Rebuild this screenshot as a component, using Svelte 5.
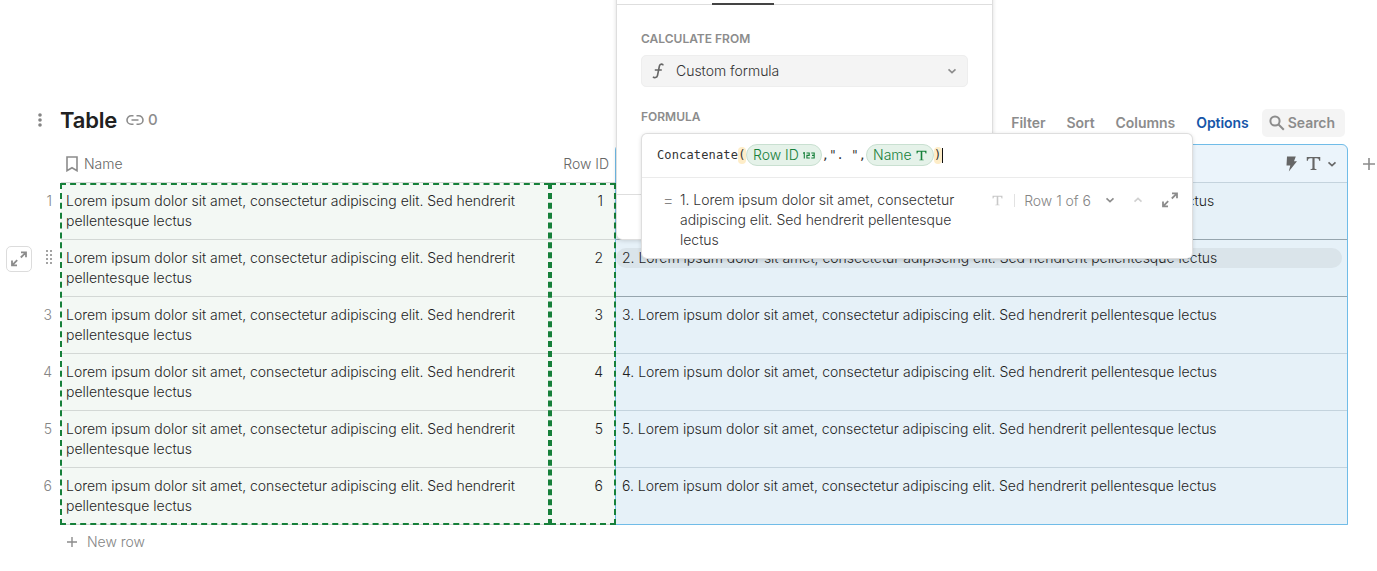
<script>
    const lorem = 'Lorem ipsum dolor sit amet, consectetur adipiscing elit. Sed hendrerit pellentesque lectus';
    const rows = [1, 2, 3, 4, 5, 6].map((id) => ({ id, name: lorem, result: `${id}. ${lorem}` }));
    const actions = ['Filter', 'Sort', 'Columns', 'Options'];

    let hovered = $state(2);
    let active = $state('Options');
</script>

{#snippet textIcon(size)}
    <svg class="text-icon" width={size} height={size} viewBox="0 0 14 14">
        <path d="M0.7 1h12.6v3.5h-1.1c-.2-1.6-.7-2.3-2.2-2.3H8v9.1c0 .8.3 1 1.8 1.1v.6H4.2v-.6c1.5-.1 1.8-.3 1.8-1.1V2.200H4c-1.500 0-2 .7-2.200 2.300H.7z" />
    </svg>
{/snippet}

{#snippet chevron(up)}
    <svg class="chevron" width="10" height="10" viewBox="0 0 10 10">
        <path d={up ? 'M1.500 6.700 5 3.400l3.500 3.300' : 'M1.500 3.400 5 6.700l3.500-3.300'} />
    </svg>
{/snippet}

{#snippet expandIcon()}
    <svg class="expand-icon" width="18" height="18" viewBox="0 0 18 18">
        <path d="M11 2.300h5v5M15.500 2.800 10.800 7.500M7 15.400H2v-5M2.500 14.900l4.700-4.700" />
    </svg>
{/snippet}

<main>
    <div class="toolbar">
        <svg class="dots" width="6" height="16" viewBox="0 0 6 16">
            <circle cx="3" cy="3" r="1.800" /><circle cx="3" cy="8" r="1.800" /><circle cx="3" cy="13" r="1.800" />
        </svg>
        <h1>Table</h1>
        <svg class="link" width="18" height="12" viewBox="0 0 18 12">
            <path d="M7.500 1.700H5.300a4.300 4.300 0 0 0 0 8.600h2.200M10.500 1.700h2.200a4.300 4.300 0 0 1 0 8.600h-2.200M5.500 6h7" />
        </svg>
        <span class="count">0</span>
        <nav>
            {#each actions as action}
                <button class:active={active === action} onclick={() => (active = action)}>{action}</button>
            {/each}
            <button class="search">
                <svg width="16" height="16" viewBox="0 0 16 16">
                    <circle cx="6" cy="6" r="4.600" /><path d="m9.500 9.500 5.300 5.300" />
                </svg>
                Search
            </button>
        </nav>
    </div>

    <div class="table">
        <div class="row head">
            <div class="gutter"></div>
            <div class="cell name">
                <svg width="12" height="16" viewBox="0 0 12 16"><path d="M1 1h10v13.700l-5-3-5 3z" /></svg>
                Name
            </div>
            <div class="cell row-id">Row ID</div>
            <div class="cell result">
                <svg width="11" height="16" viewBox="0 0 11 16"><path class="solid" d="M1 .5h8.800L8 5.300h3L2.800 15.500 4.300 9.500H.5z" /></svg>
                {@render textIcon(15)}
                {@render chevron(false)}
            </div>
            <div class="add">
                <svg width="12" height="12" viewBox="0 0 12 12"><path d="M6 0v12M0 6h12" /></svg>
            </div>
        </div>

        {#each rows as row}
            <div class="row" class:hovered={hovered === row.id} class:before={hovered === row.id + 1}>
                <div class="gutter">
                    {#if hovered === row.id}
                        <span class="open">{@render expandIcon()}</span>
                        <svg class="grip" width="6" height="16" viewBox="0 0 6 16">
                            {#each [1, 5, 9, 13] as y}
                                <rect x="0" {y} width="2" height="2" /><rect x="4" {y} width="2" height="2" />
                            {/each}
                        </svg>
                    {:else}
                        {row.id}
                    {/if}
                </div>
                <div class="cell name">{row.name}</div>
                <div class="cell row-id">{row.id}</div>
                <div class="cell result"><span>{row.result}</span></div>
            </div>
        {/each}

        <!-- columns referenced by the formula -->
        <div class="marker first"></div>
        <div class="marker second"></div>
        <div class="selection"></div>
    </div>

    <div class="new-row">
        <svg width="10" height="10" viewBox="0 0 10 10"><path d="M5 0v10M0 5h10" /></svg>
        New row
    </div>

    <section class="panel">
        <div class="tabs"><span class="tab"></span></div>
        <div class="panel-body">
            <h2>CALCULATE FROM</h2>
            <div class="select">
                <svg width="12" height="16" viewBox="0 0 12 16">
                    <path d="M11.200 2.400C10.800.8 8 .5 7.400 3L5.500 12.500c-.5 2.400-3.300 2.600-4.500 1.200M2.800 7h7" />
                </svg>
                <span>Custom formula</span>
                {@render chevron(false)}
            </div>
            <h2>FORMULA</h2>
        </div>
        <div class="panel-footer"></div>
    </section>

    <section class="editor">
        <div class="formula">
            <span>Concatenate</span><span class="paren">(</span><span class="chip">Row ID
                <svg class="num" width="12" height="7" viewBox="0 0 12 7">
                    <path d="M0 1.200 1.300.700v5.800M3.500 1H6.200V3.400H3.900V6H6.800M8.300 1h2.900v5H8.300M9 3.400h2.200" />
                </svg></span><span class="code">,". ",</span><span class="chip">Name {@render textIcon(11)}</span><span class="paren">)</span><span class="caret"></span>
        </div>
        <div class="preview">
            <span class="equals">=</span>
            <p>1. {lorem}</p>
            <div class="pager">
                {@render textIcon(11)}
                <span class="row-pos">Row 1 of 6</span>
                {@render chevron(false)}
                <span class="disabled">{@render chevron(true)}</span>
                {@render expandIcon()}
            </div>
        </div>
    </section>
</main>

<style>
    :global(body) {
        background: #fff;
    }

    main {
        position: relative;
        width: 1377px;
        height: 571px;
        overflow: hidden;
        font: 350 14px/20px Inter, sans-serif;
        letter-spacing: -0.02px;
        color: #1f1f1f;
    }

    svg {
        display: block;
        flex: none;
        fill: none;
        stroke: #8c8c8c;
        stroke-width: 1.6;
    }

    .toolbar {
        display: flex;
        align-items: center;
        height: 144px;
        padding: 96px 32px 0 37px;
        box-sizing: border-box;
    }

    .dots {
        fill: #858585;
        stroke: none;
    }

    h1 {
        margin: 0 9px 0 17px;
        font-size: 22px;
        line-height: 28px;
        font-weight: 600;
        letter-spacing: -0.2px;
        color: #212121;
    }

    .count {
        margin-left: 4px;
        font-size: 15px;
        font-weight: 500;
        color: #8c8c8c;
    }

    nav {
        display: flex;
        align-items: center;
        gap: 21px;
        margin: 6px 0 0 auto;
    }

    button {
        padding: 0;
        border: 0;
        background: none;
        font: 600 14px/20px Inter, sans-serif;
        letter-spacing: -0.05px;
        color: #8c8c8c;
    }

    button.active {
        color: #1656a8;
    }

    .search {
        display: flex;
        align-items: center;
        gap: 3px;
        height: 28px;
        margin-left: -8px;
        padding: 0 10px 0 7px;
        border-radius: 5px;
        background: #f4f4f4;
    }

    .search svg {
        stroke-width: 2;
    }

    .table {
        position: relative;
    }

    .row {
        display: grid;
        grid-template-columns: 61px 489px 66px 732px 29px;
        height: 57px;
    }

    .gutter {
        display: flex;
        justify-content: flex-end;
        padding: 8px 9px 0 0;
        color: #858585;
    }

    .cell {
        box-sizing: border-box;
        border-bottom: 1px solid #d3d8d5;
        padding: 8px 5px;
        background: #f3f8f4;
    }

    .row-id {
        padding-right: 13px;
        text-align: right;
    }

    .cell.result {
        padding: 8px 6px;
        border-color: #c4d3dd;
        background: #e6f1f8;
        white-space: nowrap;
    }

    .before .cell.result,
    .hovered .cell.result {
        border-color: #96a5ae;
    }

    .hovered .result span {
        display: block;
        margin: 0 0 0 -6px;
        padding-left: 6px;
        border-radius: 10px;
        background: #dae4ea;
    }

    .head {
        height: 39px;
    }

    .head .cell {
        display: flex;
        align-items: center;
        gap: 6px;
        padding-top: 9px;
        background: #fff;
        color: #666;
    }

    .head .row-id {
        justify-content: flex-end;
        padding-right: 7px;
    }

    .head .cell.result {
        justify-content: flex-end;
        gap: 9px;
        padding-right: 11px;
        border-radius: 0 6px 0 0;
        background: #ebf4fb;
    }

    .head .result .chevron {
        margin-left: -3px;
        stroke: #666;
    }

    .solid {
        fill: #666;
        stroke: none;
    }

    .add {
        display: flex;
        align-items: center;
        padding-left: 15px;
    }

    .text-icon {
        fill: #666;
        stroke: none;
    }

    .expand-icon {
        stroke-width: 1.8;
    }

    .open {
        display: flex;
        align-items: center;
        justify-content: center;
        width: 24px;
        height: 24px;
        margin: -2px 14px 0 0;
        border: 1px solid #dcdcdc;
        border-radius: 5px;
    }

    .grip {
        margin-top: 1px;
        fill: #a3a3a3;
        stroke: none;
    }

    .marker,
    .selection {
        position: absolute;
        top: 39px;
        bottom: 0;
        box-sizing: border-box;
        pointer-events: none;
    }

    .marker {
        z-index: 1;
        border: 2px dashed #16803a;
    }

    .first {
        left: 60px;
        width: 490px;
    }

    .second {
        left: 550px;
        width: 66px;
    }

    .selection {
        top: 0;
        left: 615px;
        width: 733px;
        border: 1px solid #70bce8;
        border-radius: 6px 6px 0 0;
    }

    .new-row {
        display: flex;
        align-items: center;
        gap: 10px;
        padding: 7px 0 0 67px;
        color: #858585;
    }

    .new-row svg {
        stroke-width: 1.4;
    }

    .panel {
        position: absolute;
        z-index: 2;
        top: -10px;
        left: 617px;
        display: flex;
        flex-direction: column;
        width: 375px;
        height: 249px;
        border-radius: 0 0 5px 5px;
        background: #fff;
        box-shadow: 0 0 0 1px #dedede, 0 1px 5px rgba(0, 0, 0, 0.2);
    }

    .tabs {
        display: flex;
        align-items: flex-end;
        height: 15px;
        box-sizing: border-box;
        border-bottom: 1px solid #dedede;
    }

    .tab {
        width: 62px;
        height: 2px;
        margin: 0 0 -1px 95px;
        background: #444;
    }

    .panel-body {
        flex: 1;
        padding: 24px 24px 0;
    }

    h2 {
        margin: 0;
        font-size: 12px;
        line-height: 20px;
        font-weight: 600;
        letter-spacing: 0;
        color: #8c8c8c;
    }

    .select {
        display: flex;
        align-items: center;
        height: 32px;
        margin: 6px 0 20px;
        padding: 0 10px;
        box-sizing: border-box;
        border: 1px solid #eee;
        border-radius: 5px;
        background: #f4f4f4;
        color: #333;
    }

    .select span {
        flex: 1;
        margin-left: 12px;
    }

    .select > svg:first-child {
        stroke: #666;
    }

    .panel-footer {
        height: 44px;
        border-top: 1px solid #dedede;
    }

    .editor {
        position: absolute;
        z-index: 3;
        top: 134px;
        left: 642px;
        width: 550px;
        height: 124px;
        border-radius: 5px;
        background: #fff;
        box-shadow: 0 0 0 1px #dedede, 0 1px 5px rgba(0, 0, 0, 0.2);
    }

    .formula {
        display: flex;
        align-items: center;
        height: 42px;
        padding: 0 0 1px 15px;
        border-bottom: 1px solid #ebebeb;
        font: 12px/17px "DejaVu Sans Mono", monospace;
        letter-spacing: 0.14px;
        white-space: pre;
        color: #333;
    }

    .paren {
        width: 8px;
        border-radius: 4px;
        background: #feedc8;
        text-align: center;
    }

    .chip {
        display: flex;
        align-items: center;
        gap: 4px;
        height: 20px;
        padding: 0 6px;
        border: 1px solid #c9e0d1;
        border-radius: 11px;
        background: #e5f2e9;
        font: 350 14px/20px Inter, sans-serif;
        letter-spacing: 0;
        white-space: normal;
        color: #16803a;
    }

    .chip .text-icon {
        fill: #16803a;
    }

    .num {
        stroke: #16803a;
        stroke-width: 1.1;
    }

    .caret {
        width: 1px;
        height: 15px;
        background: #111;
    }

    .preview {
        display: flex;
        padding: 12px 13px 0 21px;
        color: #333;
    }

    .equals {
        width: 17px;
        font-size: 16px;
        color: #858585;
    }

    p {
        width: 290px;
        margin: 0;
    }

    .pager {
        display: flex;
        align-items: center;
        height: 20px;
        margin-left: auto;
        color: #858585;
    }

    .pager .text-icon {
        fill: #c8c8c8;
    }

    .row-pos {
        margin: 0 14px 0 11px;
        padding-left: 9px;
        border-left: 1px solid #e2e2e2;
        line-height: 13px;
    }

    .disabled {
        margin: 0 18px;
        opacity: 0.4;
    }
</style>
